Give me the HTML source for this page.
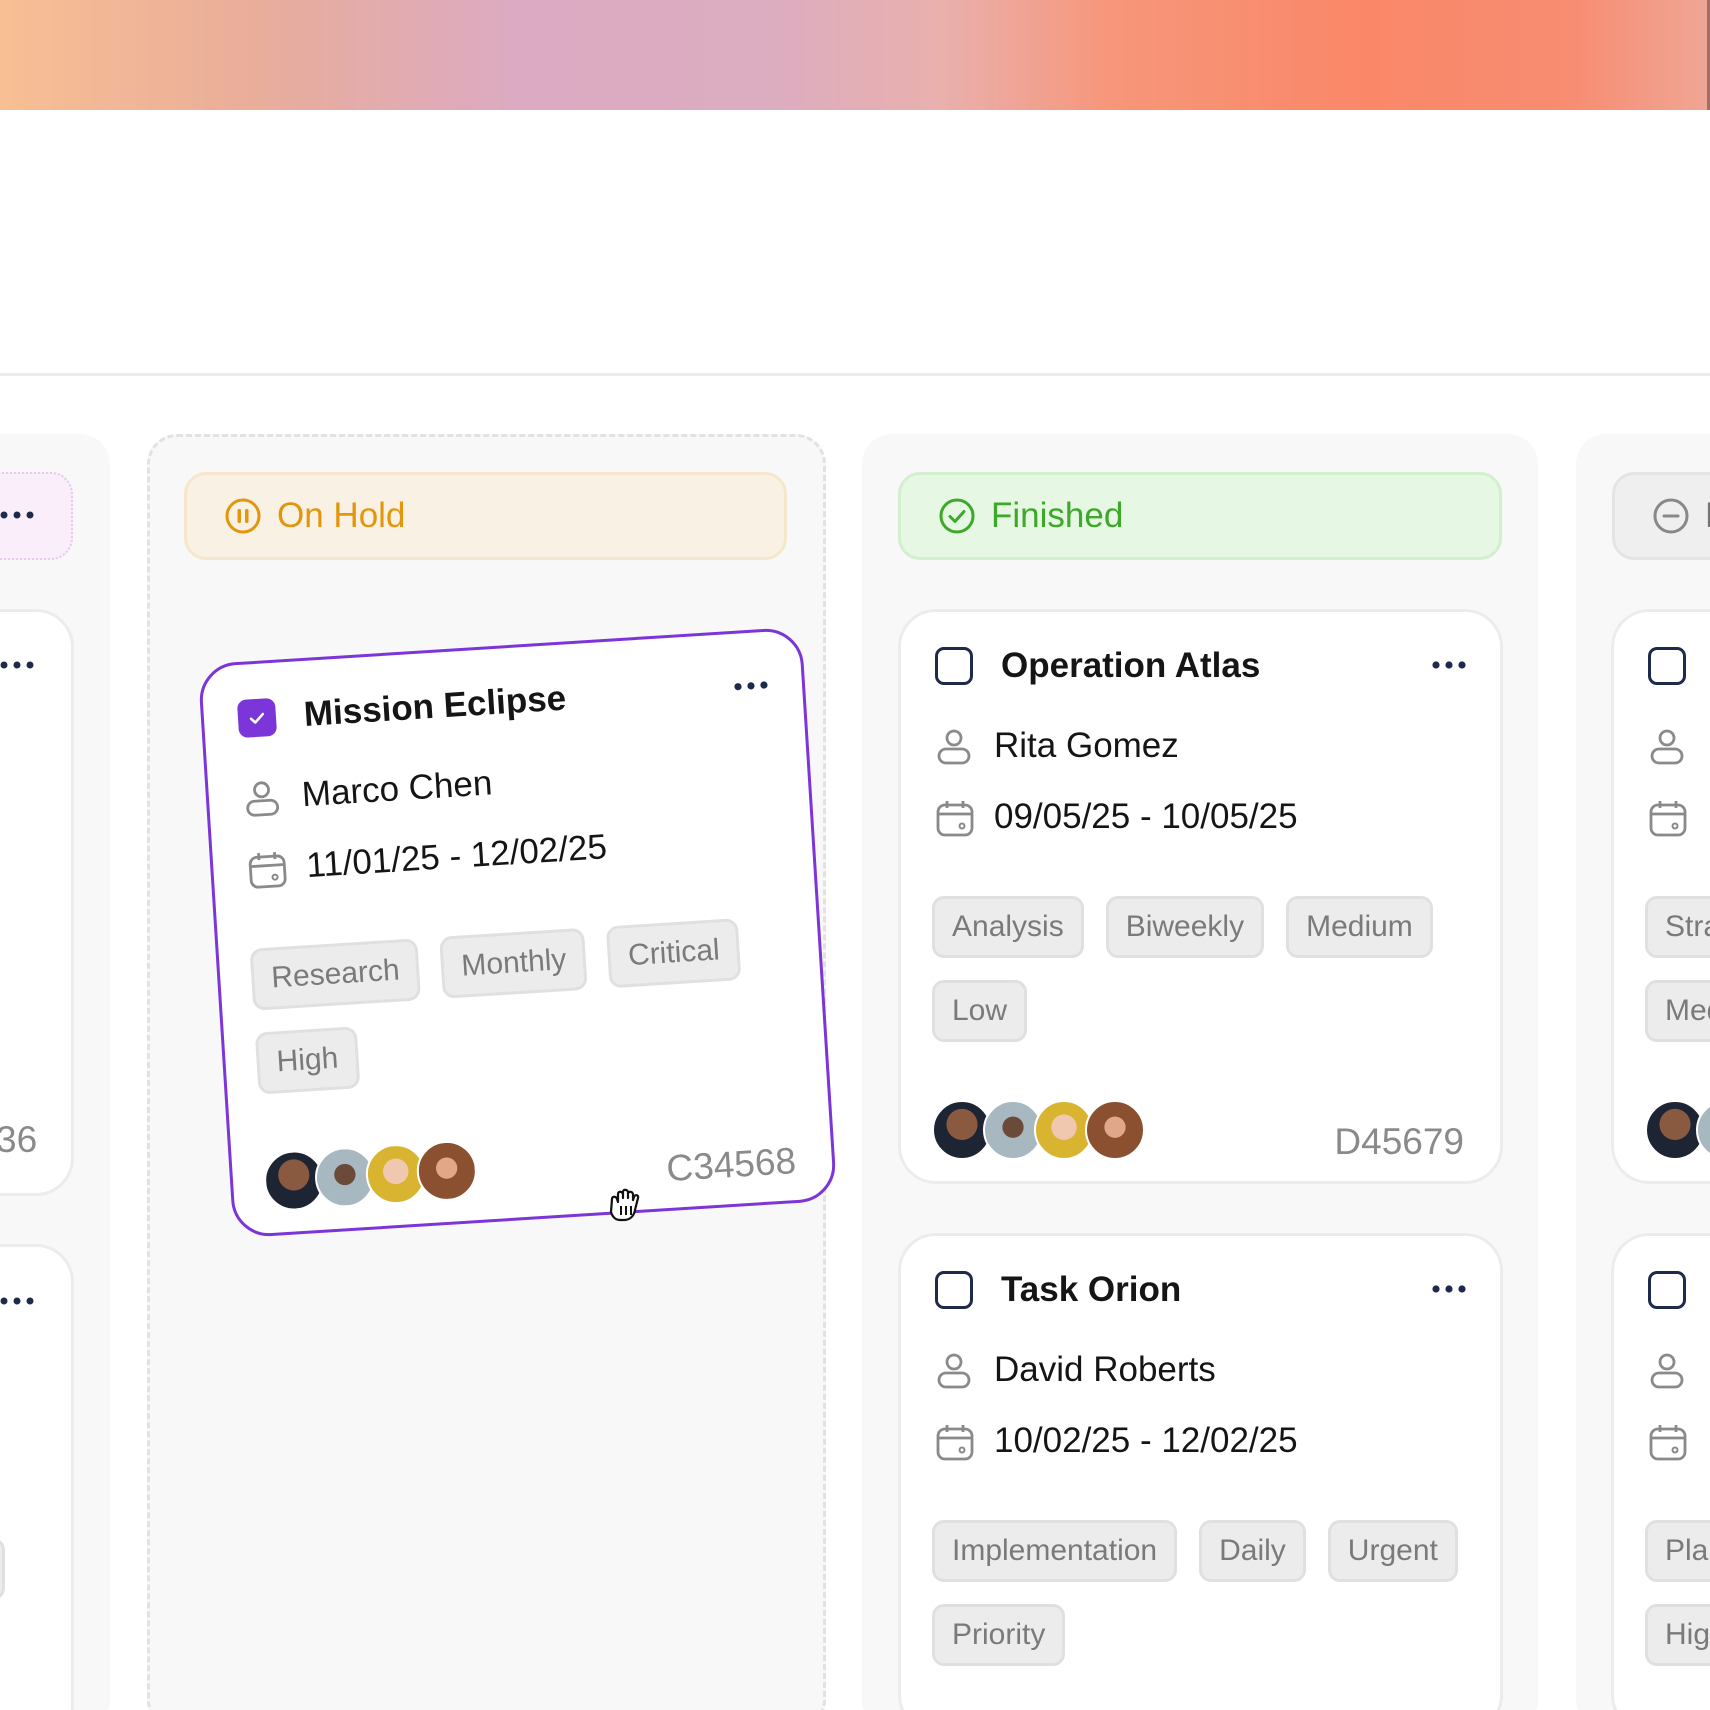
<!DOCTYPE html>
<html><head><meta charset="utf-8">
<style>
*{box-sizing:border-box;margin:0;padding:0}
html,body{width:1710px;height:1710px;overflow:hidden;background:#fff}
body{font-family:"Liberation Sans",sans-serif}
#wrap{position:relative;width:1710px;height:1710px;overflow:hidden}
.grad{position:absolute;left:0;top:0;width:1710px;height:110px;background:linear-gradient(90deg,#f8bf94 0%,#e9ad9a 15%,#dcaac2 30%,#dcacc0 45%,#e9b0ad 55%,#f7967a 65%,#fa8768 80%,#f78d72 92%,#f0a696 100%)}
.vline{position:absolute;left:1707px;top:0;width:3px;height:110px;background:#a07070}
.hline{position:absolute;left:0;top:373px;width:1710px;height:3px;background:#ececec}
.col{position:absolute;top:434px;height:1296px;background:#f8f8f8;border-radius:30px}
.hdr{position:absolute;top:472px;height:88px;border-radius:22px;border:3px solid;display:flex;align-items:center;font-size:35px;overflow:hidden}
.card{position:absolute;width:605px;height:575px;background:#fff;border:3px solid #ececec;border-radius:38px;overflow:hidden}
.card .cb{position:absolute;left:34px;top:35px;width:38px;height:38px;border:3px solid #1e2a4a;border-radius:9px}
.card .title{position:absolute;left:100px;top:34px;font-size:35px;font-weight:bold;color:#151515;white-space:nowrap}
.card .dots{position:absolute;left:530px;top:48px;width:36px;height:10px}
.card .row{position:absolute;left:93px;font-size:35px;color:#151515;white-space:nowrap}
.card .ic{position:absolute;left:34px}
.tags{position:absolute;left:31px;top:284px;width:560px;display:flex;flex-wrap:wrap;gap:22px 22px}
.tag{height:62px;padding:0 17px;border:3px solid #e0e0e0;background:#ececec;border-radius:12px;font-size:30px;color:#7a7a7a;display:flex;align-items:center;white-space:nowrap}
.av{position:absolute;top:488px;width:60px;height:60px;border-radius:50%;border:2px solid #fff}
.id{position:absolute;right:36px;top:509px;font-size:37px;color:#8a8a8a}
</style></head><body><div id="wrap">
<div class="grad"></div><div class="vline"></div>
<div class="hline"></div>

<div class="col" style="left:-540px;width:650px"></div>
<div class="hdr" style="left:-500px;width:573px;background:#fbeefb;border:2px dotted #e8c6ee"></div>
<svg style="position:absolute;left:0;top:508px" width="40" height="14"><circle cx="4" cy="7" r="3.5" fill="#1e2a4a"/><circle cx="17" cy="7" r="3.5" fill="#1e2a4a"/><circle cx="30" cy="7" r="3.5" fill="#1e2a4a"/></svg>
<div class="card" style="left:-531px;top:609px;height:587px"></div>
<svg style="position:absolute;left:0;top:658px" width="40" height="14"><circle cx="4" cy="7" r="3.5" fill="#1e2a4a"/><circle cx="17" cy="7" r="3.5" fill="#1e2a4a"/><circle cx="30" cy="7" r="3.5" fill="#1e2a4a"/></svg>
<div style="position:absolute;left:-4px;top:1119px;font-size:37px;color:#8a8a8a">36</div>
<div class="card" style="left:-531px;top:1244px;height:500px"></div>
<svg style="position:absolute;left:0;top:1294px" width="40" height="14"><circle cx="4" cy="7" r="3.5" fill="#1e2a4a"/><circle cx="17" cy="7" r="3.5" fill="#1e2a4a"/><circle cx="30" cy="7" r="3.5" fill="#1e2a4a"/></svg>
<div style="position:absolute;left:-20px;top:1538px;width:25px;height:62px;border:3px solid #e0e0e0;background:#ececec;border-radius:12px"></div>

<div class="col" style="left:147px;width:679px;border:3px dashed #e2e2e2"></div>
<div class="hdr" style="left:184px;width:603px;background:#f9f1e4;border-color:#f4e7cc;color:#e2960b">
<svg style="margin-left:37px;margin-right:15px" width="38" height="38" viewBox="0 0 38 38"><circle cx="19" cy="19" r="16" fill="none" stroke="#e2960b" stroke-width="3"/><rect x="13.5" y="12" width="3.5" height="14" rx="1.5" fill="#e2960b"/><rect x="21" y="12" width="3.5" height="14" rx="1.5" fill="#e2960b"/></svg>On Hold</div>

<div class="col" style="left:862px;width:676px"></div>
<div class="hdr" style="left:898px;width:604px;background:#e6f7e3;border-color:#d3f0ce;color:#3da82a">
<svg style="margin-left:37px;margin-right:15px" width="38" height="38" viewBox="0 0 38 38"><circle cx="19" cy="19" r="16" fill="none" stroke="#3da82a" stroke-width="3"/><path d="M12 19.5l5 5 9-10" fill="none" stroke="#3da82a" stroke-width="3" stroke-linecap="round" stroke-linejoin="round"/></svg>Finished</div>

<div class="col" style="left:1576px;width:676px"></div>
<div class="hdr" style="left:1612px;width:604px;background:#efefef;border-color:#e4e4e4;color:#777">
<svg style="margin-left:37px;margin-right:15px" width="38" height="38" viewBox="0 0 38 38"><circle cx="19" cy="19" r="16" fill="none" stroke="#888" stroke-width="3"/><path d="M12 19h14" stroke="#888" stroke-width="3" stroke-linecap="round"/></svg>N</div>

<svg width="0" height="0" style="position:absolute">
<defs>
<g id="person"><circle cx="19" cy="11" r="7" fill="none" stroke="#8a8a8a" stroke-width="2.8"/><rect x="4" y="22" width="30" height="14" rx="7" fill="none" stroke="#8a8a8a" stroke-width="2.8"/></g>
<g id="cal"><rect x="3" y="7" width="34" height="30" rx="7" fill="none" stroke="#8a8a8a" stroke-width="2.8"/><path d="M3 16h34M12 3v7M28 3v7" stroke="#8a8a8a" stroke-width="2.8" fill="none"/><circle cx="27" cy="28" r="2.5" fill="none" stroke="#8a8a8a" stroke-width="2"/></g>
<g id="dots"><circle cx="5" cy="5" r="3.6" fill="#1e2a4a"/><circle cx="18" cy="5" r="3.6" fill="#1e2a4a"/><circle cx="31" cy="5" r="3.6" fill="#1e2a4a"/></g>
</defs></svg>

<div class="card" style="left:898px;top:609px">
<div class="cb"></div><div class="title">Operation Atlas</div>
<svg class="dots" viewBox="0 0 36 10"><use href="#dots"/></svg>
<svg class="ic" style="top:115px" width="38" height="40"><use href="#person"/></svg><div class="row" style="top:114px">Rita Gomez</div>
<svg class="ic" style="top:186px" width="40" height="40"><use href="#cal"/></svg><div class="row" style="top:185px">09/05/25 - 10/05/25</div>
<div class="tags"><div class="tag">Analysis</div><div class="tag">Biweekly</div><div class="tag">Medium</div><div class="tag">Low</div></div>
<div class="av" style="left:31px;background:radial-gradient(circle at 50% 40%,#8a5a40 0 35%,#1d2433 36%)"></div>
<div class="av" style="left:82px;background:radial-gradient(circle at 50% 45%,#6b4a3a 0 25%,#a8b8c0 26%)"></div>
<div class="av" style="left:133px;background:radial-gradient(circle at 50% 45%,#f0c8b0 0 30%,#d8b430 31%)"></div>
<div class="av" style="left:184px;background:radial-gradient(circle at 50% 45%,#e0a888 0 25%,#8a5030 26%)"></div>
<div class="id">D45679</div>
</div>

<div class="card" style="left:898px;top:1233px;height:500px">
<div class="cb"></div><div class="title">Task Orion</div>
<svg class="dots" viewBox="0 0 36 10"><use href="#dots"/></svg>
<svg class="ic" style="top:115px" width="38" height="40"><use href="#person"/></svg><div class="row" style="top:114px">David Roberts</div>
<svg class="ic" style="top:186px" width="40" height="40"><use href="#cal"/></svg><div class="row" style="top:185px">10/02/25 - 12/02/25</div>
<div class="tags"><div class="tag">Implementation</div><div class="tag">Daily</div><div class="tag">Urgent</div><div class="tag">Priority</div></div>
</div>

<div class="card" style="left:1611px;top:609px;width:99px;border-right:none;border-radius:38px 0 0 38px">
<div class="cb"></div>
<svg class="ic" style="top:115px" width="38" height="40"><use href="#person"/></svg>
<svg class="ic" style="top:186px" width="40" height="40"><use href="#cal"/></svg>
<div class="tags" style="width:80px"><div class="tag">Strategy</div><div class="tag">Medium</div></div>
<div class="av" style="left:31px;background:radial-gradient(circle at 50% 40%,#8a5a40 0 35%,#1d2433 36%)"></div>
<div class="av" style="left:82px;background:radial-gradient(circle at 50% 45%,#6b4a3a 0 25%,#a8b8c0 26%)"></div>
</div>
<div class="card" style="left:1611px;top:1233px;height:500px;width:99px;border-right:none;border-radius:38px 0 0 38px">
<div class="cb"></div>
<svg class="ic" style="top:115px" width="38" height="40"><use href="#person"/></svg>
<svg class="ic" style="top:186px" width="40" height="40"><use href="#cal"/></svg>
<div class="tags" style="width:80px"><div class="tag">Planning</div><div class="tag">High</div></div>
</div>

<div class="card" style="left:215px;top:645px;border-color:#7b35d8;transform:rotate(-3.6deg)">
<div class="cb" style="background:#7b35d8;border-color:#7b35d8"><svg width="32" height="32" viewBox="0 0 32 32" style="position:absolute;left:0;top:0"><path d="M10 16.5l4 4 8-8" fill="none" stroke="#fff" stroke-width="2.6" stroke-linecap="round" stroke-linejoin="round"/></svg></div>
<div class="title">Mission Eclipse</div>
<svg class="dots" viewBox="0 0 36 10"><use href="#dots"/></svg>
<svg class="ic" style="top:115px" width="38" height="40"><use href="#person"/></svg><div class="row" style="top:114px">Marco Chen</div>
<svg class="ic" style="top:186px" width="40" height="40"><use href="#cal"/></svg><div class="row" style="top:185px">11/01/25 - 12/02/25</div>
<div class="tags"><div class="tag">Research</div><div class="tag">Monthly</div><div class="tag">Critical</div><div class="tag">High</div></div>
<div class="av" style="left:31px;background:radial-gradient(circle at 50% 40%,#8a5a40 0 35%,#1d2433 36%)"></div>
<div class="av" style="left:82px;background:radial-gradient(circle at 50% 45%,#6b4a3a 0 25%,#a8b8c0 26%)"></div>
<div class="av" style="left:133px;background:radial-gradient(circle at 50% 45%,#f0c8b0 0 30%,#d8b430 31%)"></div>
<div class="av" style="left:184px;background:radial-gradient(circle at 50% 45%,#e0a888 0 25%,#8a5030 26%)"></div>
<div class="id">C34568</div>
</div>

<svg style="position:absolute;left:604px;top:1185px" width="44" height="42" viewBox="0 0 44 42">
<path d="M8 14c0-3 4-3 5 0l1 3V9c0-3 4-3 5 0v4V7c0-3 4-3 5 0v6V9c0-3 4-3 5 0v6l1-3c1-3 5-2 4 1l-3 12c-1 6-5 10-11 10h-4c-5 0-8-4-9-8z" fill="#fff" stroke="#111" stroke-width="2.2" stroke-linejoin="round"/>
<path d="M17 21v9M22 21v9M27 21v9" stroke="#111" stroke-width="2"/>
</svg>
</div></body></html>
